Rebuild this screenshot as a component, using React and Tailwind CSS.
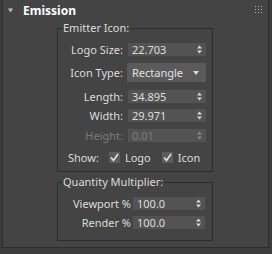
import React from 'react';

const Arrows = () => (
  <svg width="5" height="9" viewBox="0 0 5 9" className="shrink-0">
    <path d="M2.5 0.5 L5 3.5 L0 3.5 Z" fill="#d8d8d8" />
    <path d="M0 5.5 L5 5.5 L2.5 8.5 Z" fill="#d8d8d8" />
  </svg>
);

const Spinner = ({ value, width, disabled }) => (
  <div
    className={`flex items-center justify-between h-[13px] pl-[4px] pr-[4px] bg-[#535353] ${disabled ? 'text-[#7c7c7c]' : 'text-[#dedede]'}`}
    style={{ width }}
  >
    <span className="leading-none">{value}</span>
    <div className={disabled ? 'opacity-40' : ''}>
      <Arrows />
    </div>
  </div>
);

const Check = () => (
  <div className="w-[11px] h-[11px] bg-[#5c5c5c] flex items-center justify-center">
    <svg width="9" height="9" viewBox="0 0 9 9">
      <path d="M1 4.5 L3.5 7.5 L8 1" stroke="#e4e4e4" strokeWidth="1.6" fill="none" />
    </svg>
  </div>
);

const Row = ({ label, children, labelW, gap, mt, dim }) => (
  <div className="flex items-center h-[13px]" style={{ marginTop: mt }}>
    <span
      className={`text-right leading-none ${dim ? 'text-[#7c7c7c]' : ''}`}
      style={{ width: labelW, marginRight: gap }}
    >
      {label}
    </span>
    {children}
  </div>
);

export default function App() {
  return (
    <div className="w-[272px] h-[254px] bg-[#3c3c3c] font-['Noto_Sans',sans-serif] text-[11px] text-[#dcdcdc] overflow-hidden">
      <div className="ml-[2px] w-[267px] h-[248px] bg-[#444444] border-l border-r border-b border-[#2e2e2e]">
        {/* header */}
        <div className="relative flex items-center h-[21px] pl-[5px]">
          <svg width="5" height="5" viewBox="0 0 5 5">
            <path d="M0 0.5 L5 0.5 L2.5 4.5 Z" fill="#bdbdbd" />
          </svg>
          <span className="ml-[10px] font-bold text-[12px] text-white leading-none">Emission</span>
          <svg width="7" height="7" viewBox="0 0 7 7" className="absolute right-[6px] top-[6px]">
            {[0, 3, 6].map((x) =>
              [0, 3, 6].map((y) => (
                <rect key={`${x}-${y}`} x={x} y={y} width="1" height="1" fill="#b0b0b0" />
              ))
            )}
          </svg>
        </div>

        <div className="pl-[54px]">
          <fieldset className="w-[156px] border border-[#2d2d2d] pb-[7px]">
            <legend className="ml-[4px] px-[1px] leading-[14px]">Emitter Icon:</legend>
            <Row label="Logo Size:" labelW={65} gap={5} mt={8}>
              <Spinner value="22.703" width={78} />
            </Row>
            <div className="flex items-center h-[19px] mt-[7px]">
              <span className="w-[65px] text-right leading-none mr-[4px]">Icon Type:</span>
              <div className="w-[79px] h-[19px] bg-[#5a5a5a] flex items-center justify-between pl-[5px] pr-[7px]">
                <span className="leading-none text-[#e2e2e2]">Rectangle</span>
                <svg width="6" height="4" viewBox="0 0 6 4">
                  <path d="M0 0 L6 0 L3 4 Z" fill="#dadada" />
                </svg>
              </div>
            </div>
            <Row label="Length:" labelW={65} gap={5} mt={8}>
              <Spinner value="34.895" width={78} />
            </Row>
            <Row label="Width:" labelW={65} gap={5} mt={6}>
              <Spinner value="29.971" width={78} />
            </Row>
            <Row label="Height:" labelW={65} gap={5} mt={7} dim>
              <Spinner value="0.01" width={78} disabled />
            </Row>
            <div className="flex items-center h-[13px] mt-[9px] pl-[10px]">
              <span className="leading-none">Show:</span>
              <div className="ml-[10px]"><Check /></div>
              <span className="ml-[5px] leading-none">Logo</span>
              <div className="ml-[11px]"><Check /></div>
              <span className="ml-[5px] leading-none">Icon</span>
            </div>
          </fieldset>

          <fieldset className="w-[156px] mt-[3px] border border-[#2d2d2d] pb-[11px]">
            <legend className="ml-[4px] px-[1px] leading-[14px]">Quantity Multiplier:</legend>
            <Row label="Viewport %" labelW={73} gap={2} mt={8}>
              <Spinner value="100.0" width={72} />
            </Row>
            <Row label="Render %" labelW={73} gap={2} mt={6}>
              <Spinner value="100.0" width={72} />
            </Row>
          </fieldset>
        </div>
      </div>
    </div>
  );
}
